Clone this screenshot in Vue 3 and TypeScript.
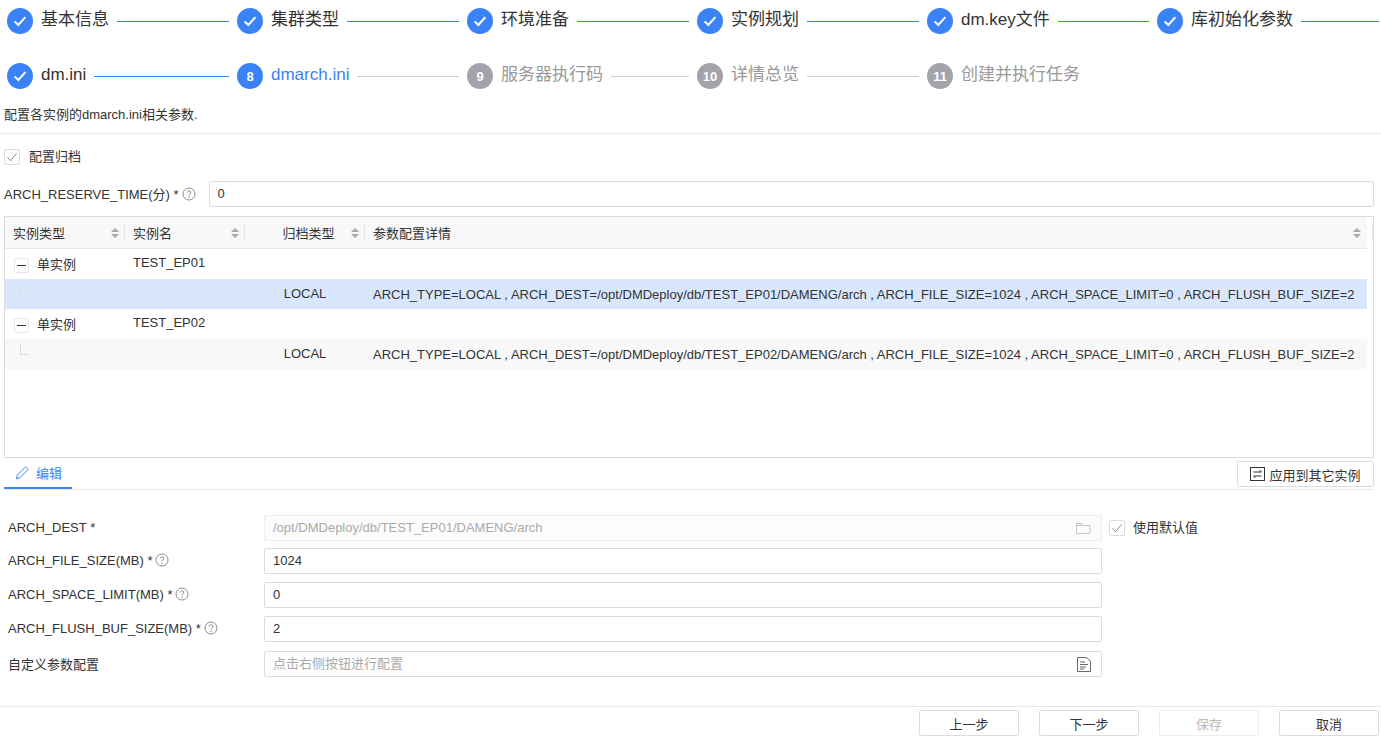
<script setup lang="ts">
interface Step {
  no: number
  label: string
  state: 'done' | 'active' | 'todo'
}

const steps: Step[] = [
  { no: 1, label: '基本信息', state: 'done' },
  { no: 2, label: '集群类型', state: 'done' },
  { no: 3, label: '环境准备', state: 'done' },
  { no: 4, label: '实例规划', state: 'done' },
  { no: 5, label: 'dm.key文件', state: 'done' },
  { no: 6, label: '库初始化参数', state: 'done' },
  { no: 7, label: 'dm.ini', state: 'done' },
  { no: 8, label: 'dmarch.ini', state: 'active' },
  { no: 9, label: '服务器执行码', state: 'todo' },
  { no: 10, label: '详情总览', state: 'todo' },
  { no: 11, label: '创建并执行任务', state: 'todo' }
]

const columns = ['实例类型', '实例名', '归档类型']

const instances = [
  {
    name: 'TEST_EP01',
    detail: 'ARCH_TYPE=LOCAL , ARCH_DEST=/opt/DMDeploy/db/TEST_EP01/DAMENG/arch , ARCH_FILE_SIZE=1024 , ARCH_SPACE_LIMIT=0 , ARCH_FLUSH_BUF_SIZE=2',
    rowClass: 'selected'
  },
  {
    name: 'TEST_EP02',
    detail: 'ARCH_TYPE=LOCAL , ARCH_DEST=/opt/DMDeploy/db/TEST_EP02/DAMENG/arch , ARCH_FILE_SIZE=1024 , ARCH_SPACE_LIMIT=0 , ARCH_FLUSH_BUF_SIZE=2',
    rowClass: 'striped'
  }
]

const numberFields = [
  { label: 'ARCH_FILE_SIZE(MB)', value: '1024' },
  { label: 'ARCH_SPACE_LIMIT(MB)', value: '0' },
  { label: 'ARCH_FLUSH_BUF_SIZE(MB)', value: '2' }
]

const footerButtons = [
  { label: '上一步', disabled: false },
  { label: '下一步', disabled: false },
  { label: '保存', disabled: true },
  { label: '取消', disabled: false }
]
</script>

<template>
  <div class="page">
    <div class="steps">
      <div v-for="s in steps" :key="s.no" class="step" :class="s.state">
        <span class="step-dot">
          <svg v-if="s.state === 'done'" width="16" height="16" viewBox="0 0 16 16">
            <path d="M2.6 8.4 6.3 12 13.4 4.2" fill="none" stroke="#fff" stroke-width="2" />
          </svg>
          <template v-else>{{ s.no }}</template>
        </span>
        <span class="step-label">{{ s.label }}</span>
        <span v-if="s.no !== 11" class="step-line"></span>
        <span v-else class="step-line none"></span>
      </div>
    </div>

    <div class="desc">配置各实例的dmarch.ini相关参数.</div>

    <div class="body">
      <label class="check top-check">
        <span class="check-box">
          <svg width="14" height="14" viewBox="0 0 14 14">
            <path d="M2.5 7.2 5.6 10.8 11.6 3.4" fill="none" stroke="#8a8a8a" stroke-width="1" />
          </svg>
        </span>
        配置归档
      </label>

      <div class="reserve-row">
        <span class="label-text">ARCH_RESERVE_TIME(分) <i class="req">*</i></span>
        <svg class="help" width="14" height="14" viewBox="0 0 14 14">
          <circle cx="7" cy="7" r="6" fill="none" stroke="#8c8c8c" />
          <path d="M5.2 5.6a1.8 1.8 0 1 1 2.7 1.5c-.6.4-.9.7-.9 1.4" fill="none" stroke="#8c8c8c" />
          <circle cx="7" cy="10.2" r=".7" fill="#8c8c8c" />
        </svg>
        <div class="input reserve-input">0</div>
      </div>

      <div class="table">
        <div class="thead">
          <div v-for="(c, i) in columns" :key="c" class="th" :class="{ center: i === 2 }">
            <span class="th-text">{{ c }}</span>
            <span class="sorter"><i class="up"></i><i class="down"></i></span>
          </div>
          <div class="th grow">
            <span class="th-text">参数配置详情</span>
            <span class="sorter"><i class="up"></i><i class="down"></i></span>
          </div>
        </div>

        <template v-for="row in instances" :key="row.name">
          <div class="tr">
            <div class="td tree-cell">
              <span class="expander"></span>
              <span>单实例</span>
            </div>
            <div class="td name-cell">{{ row.name }}</div>
            <div class="td"></div>
            <div class="td grow"></div>
          </div>
          <div class="tr child" :class="row.rowClass">
            <div class="td"><span class="tree-line"></span></div>
            <div class="td"></div>
            <div class="td center-text">LOCAL</div>
            <div class="td grow detail">{{ row.detail }}</div>
          </div>
        </template>
      </div>

      <div class="tabs">
        <div class="tab">
          <svg width="14" height="14" viewBox="0 0 14 14">
            <path d="M1.4 12.7 2.4 9 9.8 1.6a1.3 1.3 0 0 1 1.9 0l.7.7a1.3 1.3 0 0 1 0 1.9L5 11.6Z" fill="none" stroke="#3b82f6" />
          </svg>
          编辑
        </div>
        <button class="btn apply-btn" type="button">
          <svg width="16" height="14" viewBox="0 0 16 14">
            <rect x=".5" y=".5" width="14" height="13" fill="none" stroke="#333" />
            <path d="M3.5 5H11.5L9.5 3M11.5 9H3.5L5.5 11" fill="none" stroke="#333" />
          </svg>
          应用到其它实例
        </button>
      </div>

      <div class="form">
        <div class="form-row first">
          <div class="form-label">ARCH_DEST <i class="req">*</i></div>
          <div class="input disabled with-icon">
            <span>/opt/DMDeploy/db/TEST_EP01/DAMENG/arch</span>
            <svg width="15" height="13" viewBox="0 0 15 13">
              <path d="M.5 11.5V1.5H6L7 3.5H14V11.5ZM.5 3.5H7" fill="none" stroke="#c4c4c4" />
            </svg>
          </div>
          <label class="check default-check">
            <span class="check-box">
              <svg width="14" height="14" viewBox="0 0 14 14">
                <path d="M2.5 7.2 5.6 10.8 11.6 3.4" fill="none" stroke="#8a8a8a" stroke-width="1" />
              </svg>
            </span>
            使用默认值
          </label>
        </div>

        <div v-for="f in numberFields" :key="f.label" class="form-row">
          <div class="form-label">
            {{ f.label }} <i class="req">*</i>
            <svg class="help" width="14" height="14" viewBox="0 0 14 14">
              <circle cx="7" cy="7" r="6" fill="none" stroke="#8c8c8c" />
              <path d="M5.2 5.6a1.8 1.8 0 1 1 2.7 1.5c-.6.4-.9.7-.9 1.4" fill="none" stroke="#8c8c8c" />
              <circle cx="7" cy="10.2" r=".7" fill="#8c8c8c" />
            </svg>
          </div>
          <div class="input">{{ f.value }}</div>
        </div>

        <div class="form-row last">
          <div class="form-label">自定义参数配置</div>
          <div class="input with-icon placeholder">
            <span>点击右侧按钮进行配置</span>
            <svg width="14" height="15" viewBox="0 0 14 15">
              <path d="M.5.5H9.5L13.5 4V14.5H.5Z" fill="none" stroke="#666" />
              <path d="M3 5H8M3 7.5H11M3 10H9M3 12H7" fill="none" stroke="#666" />
            </svg>
          </div>
        </div>
      </div>
    </div>

    <div class="footer">
      <button v-for="b in footerButtons" :key="b.label" class="btn foot-btn" type="button" :disabled="b.disabled">
        {{ b.label }}
      </button>
    </div>
  </div>
</template>

<style>
html, body {
  margin: 0;
  background: #fff;
}
</style>

<style scoped>
.page {
  width: 1381px;
  height: 738px;
  overflow: hidden;
  box-sizing: border-box;
  font-family: "Liberation Sans", "Noto Sans CJK SC", sans-serif;
  font-size: 13px;
  color: #333;
  padding-top: 8px;
}

.steps {
  display: grid;
  grid-template-columns: repeat(6, 230px);
  row-gap: 29px;
  padding-left: 7px;
}

.step {
  display: flex;
  align-items: center;
  height: 26px;
}

.step-dot {
  width: 26px;
  height: 26px;
  flex-shrink: 0;
  border-radius: 50%;
  background: #3b82f6;
  color: #fff;
  font-size: 13px;
  font-weight: 700;
  display: flex;
  align-items: center;
  justify-content: center;
}

.step-label {
  margin-left: 8px;
  font-size: 17px;
  line-height: 24px;
  margin-top: -3px;
  color: #333;
  white-space: nowrap;
}

.step-line {
  flex: 1;
  height: 1px;
  margin: 1px 8px 0;
  background: #3b82f6;
}

.step.active .step-label {
  color: #3b82f6;
}

.step.active .step-line {
  background: #d0d0d0;
}

.step.todo .step-dot {
  background: #a3a3ab;
}

.step.todo .step-label {
  color: #999;
}

.step.todo .step-line {
  background: #d0d0d0;
}

.step-line.none {
  background: transparent !important;
}

.desc {
  margin-top: 17px;
  height: 27px;
  padding-left: 4px;
  line-height: 18px;
  border-bottom: 1px solid #e8e8e8;
}

.body {
  padding: 15px 7px 0 4px;
}

.check {
  display: flex;
  align-items: center;
  gap: 9px;
  line-height: 16px;
}

.check-box {
  width: 14px;
  height: 14px;
  border: 1px solid #dcdcdc;
  border-radius: 2px;
  display: block;
  flex-shrink: 0;
}

.reserve-row {
  display: flex;
  align-items: center;
  margin-top: 16px;
  height: 26px;
}

.label-text {
  white-space: nowrap;
  margin-top: -2px;
}

.req {
  font-style: normal;
}

.help {
  vertical-align: -2px;
  margin-left: 3px;
  flex-shrink: 0;
}

.input {
  height: 26px;
  box-sizing: border-box;
  border: 1px solid #dcdcdc;
  border-radius: 2px;
  padding: 0 8px;
  line-height: 24px;
  background: #fff;
  flex: 1;
}

.reserve-input {
  margin-left: 13px;
}

.table {
  margin-top: 9px;
  height: 242px;
  box-sizing: border-box;
  border: 1px solid #dcdcdc;
}

.thead {
  display: flex;
  height: 32px;
  width: 1362px;
  background: #f8f8f8;
  border-bottom: 1px solid #e8e8e8;
  box-sizing: border-box;
}

.th {
  width: 120px;
  flex-shrink: 0;
  display: flex;
  align-items: center;
  padding: 0 8px;
  box-sizing: border-box;
  position: relative;
}

.th::after {
  content: '';
  position: absolute;
  right: 0;
  top: 8px;
  height: 14px;
  width: 1px;
  background: #e4e4e4;
}

.th.grow {
  flex: 1;
  width: auto;
}

.th.grow::after {
  right: -6px;
}

.th.center .th-text {
  flex: 1;
  text-align: center;
  padding-left: 13px;
}

.th-text {
  flex: 1;
}

.sorter {
  display: flex;
  flex-direction: column;
  gap: 2px;
  margin-right: -2px;
}

.sorter i {
  display: block;
  width: 0;
  height: 0;
  border-left: 4px solid transparent;
  border-right: 4px solid transparent;
}

.sorter .up {
  border-bottom: 4px solid #a8a8b0;
}

.sorter .down {
  border-top: 4px solid #a8a8b0;
}

.tr {
  display: flex;
  height: 30px;
  width: 1362px;
}

.td {
  width: 120px;
  flex-shrink: 0;
  box-sizing: border-box;
  padding: 0 8px;
  line-height: 30px;
  white-space: nowrap;
  position: relative;
}

.td.grow {
  flex: 1;
  width: auto;
}

.tree-cell {
  display: flex;
  align-items: center;
  gap: 8px;
  padding-left: 9px;
  padding-top: 2px;
}

.name-cell {
  line-height: 28px;
}

.center-text {
  text-align: center;
}

.detail {
  overflow: hidden;
  line-height: 31px;
}

.expander {
  width: 13px;
  height: 13px;
  border: 1px solid #e8e8e8;
  border-radius: 2px;
  position: relative;
  display: block;
  flex-shrink: 0;
}

.expander::after {
  content: '';
  position: absolute;
  left: 2px;
  right: 2px;
  top: 6px;
  height: 1px;
  background: #333;
}

.tree-line {
  position: absolute;
  left: 15px;
  top: 5px;
  width: 8px;
  height: 10px;
  border-left: 1px solid #dcdcdc;
  border-bottom: 1px solid #dcdcdc;
}

.tr.selected {
  background: #d8e7fd;
}

.tr.striped {
  background: #f8f8f8;
}

.tabs {
  display: flex;
  align-items: flex-start;
  justify-content: space-between;
  height: 32px;
  box-sizing: border-box;
  border-bottom: 1px solid #e8e8e8;
}

.tab {
  width: 68px;
  height: 31px;
  box-sizing: border-box;
  border-bottom: 2px solid #3b82f6;
  color: #3b82f6;
  display: flex;
  align-items: center;
  gap: 7px;
  padding-left: 11px;
}

.btn {
  font-family: inherit;
  font-size: 13px;
  color: #333;
  background: #fff;
  border: 1px solid #dcdcdc;
  border-radius: 2px;
  height: 26px;
  padding: 0;
  box-sizing: border-box;
}

.apply-btn {
  width: 137px;
  margin-top: 3px;
  display: flex;
  align-items: center;
  justify-content: center;
  gap: 3px;
}

.form {
  padding: 25px 0 0 4px;
}

.form-row {
  display: flex;
  align-items: center;
  height: 26px;
  margin-bottom: 8px;
}

.form-row.first {
  margin-bottom: 7px;
}

.form-row.last {
  margin-top: 9px;
}

.form-label {
  width: 256px;
  flex-shrink: 0;
  white-space: nowrap;
  margin-top: -2px;
}

.form-row .input {
  flex: none;
  width: 838px;
}

.with-icon {
  display: flex;
  align-items: center;
  justify-content: space-between;
  padding-right: 10px;
}

.disabled {
  background: #fcfcfc;
  border-color: #eee;
  color: #aaa;
}

.placeholder {
  color: #aaa;
}

.default-check {
  margin-left: 7px;
  gap: 8px;
}

.footer {
  display: flex;
  justify-content: flex-end;
  gap: 20px;
  margin-top: 29px;
  padding: 3px 2px 0 0;
  border-top: 1px solid #e8e8e8;
}

.foot-btn {
  width: 100px;
}

.foot-btn:disabled {
  color: #bbb;
  border-color: #eee;
}
</style>
